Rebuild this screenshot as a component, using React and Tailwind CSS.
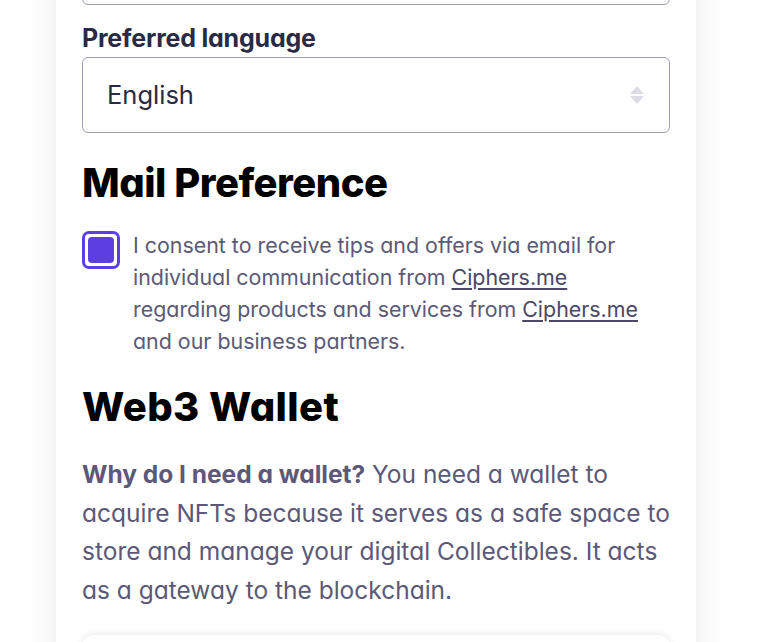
import React from "react";

export default function App() {
  const font = { fontFamily: "Inter, 'Noto Sans', sans-serif", fontFeatureSettings: "'cv11'" };
  return (
    <div className="min-h-[642px] bg-white overflow-hidden" style={font}>
      <div className="ml-[56px] w-[640px] bg-white shadow-[0_0_32px_rgba(40,40,70,0.10)] px-[26px] pb-10">
        <div className="h-[76px] -mt-[71px] rounded-[6px] border border-[#a09db9]" />
        <div className="mt-[17px] text-[25px] leading-[32px] font-bold text-[#2b2a44] tracking-[-0.2px]">Preferred language</div>
        <div className="mt-[3px] h-[76px] rounded-[6px] border border-[#a09db9] flex items-center justify-between pl-[24px] pr-[24px]">
          <span className="text-[25.5px] text-[#2b2a44]">English</span>
          <svg width="16" height="20" viewBox="0 0 16 20">
            <path d="M8 1 L15 9 L1 9 Z" fill="#dddce6" />
            <path d="M8 19 L15 11 L1 11 Z" fill="#dddce6" />
          </svg>
        </div>
        <h2 className="mt-[26px] text-[40px] leading-[48px] font-extrabold text-black tracking-[-0.5px]">Mail Preference</h2>
        <div className="mt-[24px] flex items-start gap-[13px]">
          <div className="shrink-0 w-[38px] h-[38px] rounded-[7px] border-[3px] border-[#5b3fe0] p-[3px]">
            <div className="w-full h-full rounded-[4px] bg-[#5b3fe0]" />
          </div>
          <p className="-mt-[2px] text-[21.4px] leading-[32px] text-[#5b5977] whitespace-nowrap">
            I consent to receive tips and offers via email for<br />
            individual communication from{" "}
            <span className="underline underline-offset-[3px] text-[#4a4866]">Ciphers.me</span><br />
            regarding products and services from{" "}
            <span className="underline underline-offset-[3px] text-[#4a4866]">Ciphers.me</span><br />
            and our business partners.
          </p>
        </div>
        <h2 className="mt-[26px] text-[40px] leading-[48px] font-extrabold text-black tracking-[0.4px]">Web3 Wallet</h2>
        <p className="mt-[24px] text-[24.5px] leading-[38.5px] text-[#5b5977] whitespace-nowrap">
          <b className="font-bold">Why do I need a wallet?</b> You need a wallet to<br />
          acquire NFTs because it serves as a safe space to<br />
          store and manage your digital Collectibles. It acts<br />
          as a gateway to the blockchain.
        </p>
        <div className="mt-[26px] h-[80px] rounded-[12px] bg-white shadow-[0_0_8px_rgba(40,40,70,0.12)]" />
      </div>
    </div>
  );
}
